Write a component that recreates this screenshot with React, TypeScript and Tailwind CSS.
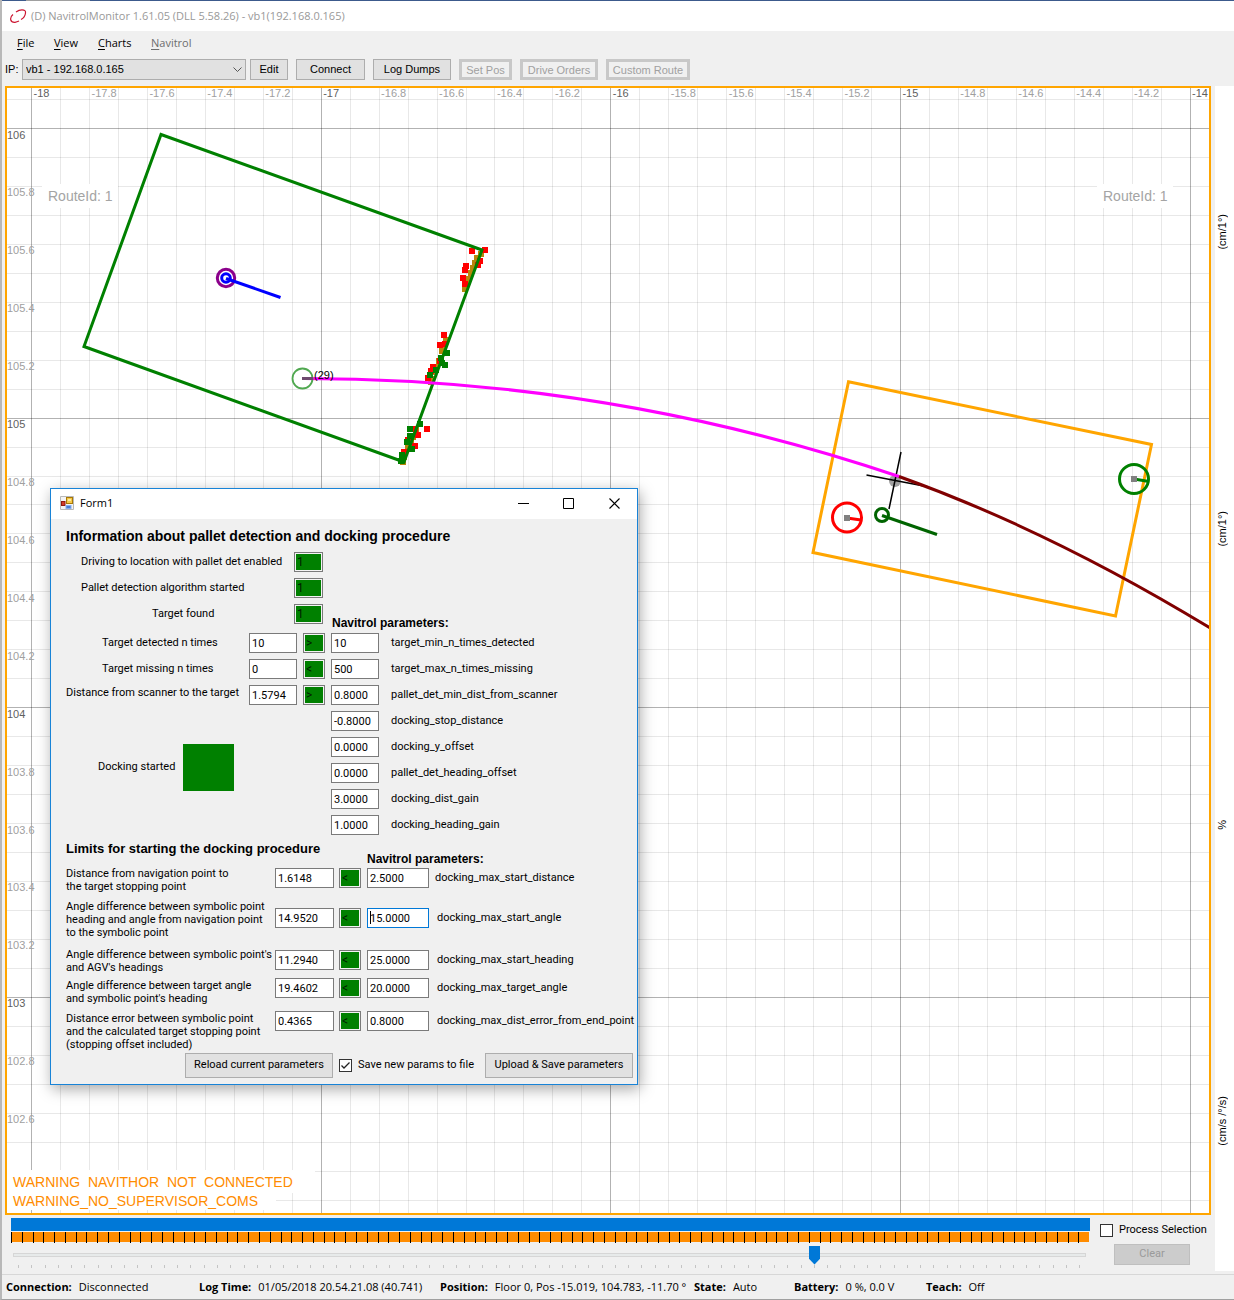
import React from "react";

const ORIGIN_X = 31.6;
const ORIGIN_Y = 128.5;
const STEP = 28.96;

const range = (from: number, to: number) =>
  Array.from({ length: to - from + 1 }, (_, i) => from + i);

type Point = [number, number];

const brownPoints: Point[] = [
  [481, 254], [477, 258], [475, 263], [473, 268], [471, 273], [468, 279], [466, 283], [465, 289],
  [446, 340], [444, 346], [442, 351], [439, 361], [436, 367], [434, 372], [432, 379], [431, 382],
  [416, 430], [413, 437], [411, 443], [408, 447], [404, 457], [403, 462],
];
const redPoints: Point[] = [
  [485, 250], [472, 251], [466, 266], [465, 270], [463, 278], [465, 284], [480, 261], [478, 265],
  [444, 335], [440, 345], [445, 344], [440, 361], [433, 367], [431, 371], [428, 378],
  [427, 429], [418, 435], [415, 446], [404, 452], [415, 429], [408, 440],
];
const greenPoints: Point[] = [
  [447, 353], [441, 358], [445, 365], [436, 370], [430, 375], [442, 363],
  [420, 424], [410, 429], [410, 436], [407, 442], [412, 449], [402, 455], [401, 461],
];

function Squares({ points, fill }: { points: Point[]; fill: string }) {
  return (
    <g fill={fill} shapeRendering="crispEdges">
      {points.map(([x, y], i) => (
        <rect key={i} x={x - 3} y={y - 3} width={6} height={6} />
      ))}
    </g>
  );
}

function MapView() {
  return (
    <svg
      viewBox="7 88 1202 1125"
      preserveAspectRatio="xMinYMin slice"
      className="block h-full w-full font-['Liberation_Sans',sans-serif]"
    >
      <g shapeRendering="crispEdges">
        {range(0, 40).map((k) => (
          <line
            key={k}
            x1={ORIGIN_X + k * STEP}
            x2={ORIGIN_X + k * STEP}
            y1={88}
            y2={1213}
            stroke="#000"
            strokeOpacity={k % 10 === 0 ? 0.3 : 0.09}
          />
        ))}
        {range(-1, 37).map((k) => (
          <line
            key={k}
            y1={ORIGIN_Y + k * STEP}
            y2={ORIGIN_Y + k * STEP}
            x1={7}
            x2={1209}
            stroke="#000"
            strokeOpacity={k % 10 === 0 ? 0.3 : 0.09}
          />
        ))}
      </g>
      <g fontSize={11}>
        {range(0, 20).map((k) => (
          <text
            key={k}
            x={ORIGIN_X + 2 + k * 2 * STEP}
            y={97}
            fill={k % 5 === 0 ? "#606060" : "#a0a0a0"}
          >
            {k % 5 === 0 ? String(-18 + k / 5) : (-18 + k / 5).toFixed(1)}
          </text>
        ))}
        {range(0, 17).map((k) => (
          <text
            key={k}
            x={7}
            y={ORIGIN_Y + 10 + k * 2 * STEP}
            fill={k % 5 === 0 ? "#606060" : "#a0a0a0"}
          >
            {k % 5 === 0 ? String(106 - k / 5) : (106 - k / 5).toFixed(1)}
          </text>
        ))}
      </g>

      <g fill="#fff">
        <rect x={42} y={184} width={76} height={24} />
        <rect x={1097} y={184} width={76} height={24} />
        <rect x={7} y={1170} width={308} height={23} />
        <rect x={7} y={1190} width={269} height={20} />
      </g>
      <g fill="#a4a4a4" fontSize={14}>
        <text x={48} y={201}>RouteId: 1</text>
        <text x={1103} y={201}>RouteId: 1</text>
      </g>
      <g fill="#ff8c00" fontSize={14}>
        <text x={13} y={1187} xmlSpace="preserve">WARNING  NAVITHOR  NOT  CONNECTED</text>
        <text x={13} y={1206}>WARNING_NO_SUPERVISOR_COMS</text>
      </g>

      <Squares points={brownPoints} fill="#b8860b" />
      <Squares points={redPoints} fill="#ff0000" />
      <path d="M161 134.5 482 250 404 462 84 346.5Z" fill="none" stroke="#008000" strokeWidth={3} />
      <Squares points={greenPoints} fill="#008000" />

      <circle cx={226} cy={278} r={8.7} fill="#fff" stroke="#8b008b" strokeWidth={3} />
      <circle cx={226} cy={278} r={4.3} fill="none" stroke="#0000ff" strokeWidth={3} />
      <path d="M226 278.5 280.500 297.500" stroke="#0000ff" strokeWidth={3} />

      <path
        d="M848.5 381.7 1151.500 444.500 1115.500 616 813 552.500Z"
        fill="none"
        stroke="#ffa500"
        strokeWidth={3}
      />
      <circle cx={895} cy={481} r={6} fill="#a0a0a0" />
      <path d="M866.500 475 929 487M901 452 889 509" stroke="#000" strokeWidth={1.5} />
      <path d="M302 378.500A1856 1856 0 0 1 899 476.500" fill="none" stroke="#ff00ff" strokeWidth={3} />
      <path d="M899 476.500Q1051 531 1211 628.500" fill="none" stroke="#800000" strokeWidth={3} />
      <circle cx={302.500} cy={378.500} r={10} fill="none" stroke="#50a850" strokeWidth={1.8} />
      <path d="M302 378.500H313" stroke="#6f4a6f" strokeWidth={3} />
      <text x={314} y={379} fontSize={11}>(29)</text>

      <g fill="none" strokeWidth={3}>
        <circle cx={882} cy={515} r={6.500} stroke="#006400" />
        <path d="M882 515.500 937 534.500" stroke="#006400" />
        <circle cx={847} cy={517.500} r={14.500} stroke="#ff0000" />
        <path d="M847 518 861 520" stroke="#ff0000" />
        <circle cx={1134} cy={479} r={14.500} stroke="#008000" />
        <path d="M1134 479 1149 481.500" stroke="#008000" />
      </g>
      <rect x={844} y={515} width={6} height={6} fill="#808080" />
      <rect x={1131} y={476} width={6} height={6} fill="#808080" />
    </svg>
  );
}

function Flag({ text, label, width }: { text: string; label: string; width: string }) {
  return (
    <input
      readOnly
      aria-label={label}
      defaultValue={text}
      className={`h-5 border border-[#7a7a7a] bg-[#008000] pl-0.5 text-xs text-black/80 shadow-[inset_0_0_0_1px_#f4f4f4] outline-none ${width}`}
    />
  );
}

function Field({
  id,
  label,
  value,
  width,
}: {
  id?: string;
  label?: string;
  value: string;
  width: string;
}) {
  return (
    <input
      id={id}
      aria-label={label}
      defaultValue={value}
      className={`h-5 border border-[#7a7a7a] bg-white pl-0.5 outline-none ${width}`}
    />
  );
}

const flags = [
  { label: "Driving to location with pallet det enabled", pad: "pl-[15px]" },
  { label: "Pallet detection algorithm started", pad: "pl-[15px]" },
  { label: "Target found", pad: "pl-[86px]" },
];

const checks = [
  { label: "Target detected n times", pad: "pl-9", value: "10", op: ">", limit: "10", param: "target_min_n_times_detected" },
  { label: "Target missing n times", pad: "pl-9", value: "0", op: "<", limit: "500", param: "target_max_n_times_missing" },
  { label: "Distance from scanner to the target", pad: "pb-1", value: "1.5794", op: ">", limit: "0.8000", param: "pallet_det_min_dist_from_scanner" },
];

const settings = [
  ["docking_stop_distance", "-0.8000"],
  ["docking_y_offset", "0.0000"],
  ["pallet_det_heading_offset", "0.0000"],
  ["docking_dist_gain", "3.0000"],
  ["docking_heading_gain", "1.0000"],
];

const limits = [
  {
    lines: ["Distance from navigation point to", "the target stopping point"],
    value: "1.6148", limit: "2.5000", param: "docking_max_start_distance",
    row: "h-[33px]", label: "", box: "pt-px", gap: "pl-1.5",
  },
  {
    lines: ["Angle difference between symbolic point", "heading and angle from navigation point", "to the symbolic point"],
    value: "14.9520", limit: "15.0000", param: "docking_max_start_angle", active: true,
    row: "h-12", label: "", box: "pt-2", gap: "pl-2",
  },
  {
    lines: ["Angle difference between symbolic point's", "and AGV's headings"],
    value: "11.2940", limit: "25.0000", param: "docking_max_start_heading",
    row: "h-[30px]", label: "", box: "pt-0.5", gap: "pl-2",
  },
  {
    lines: ["Angle difference between target angle", "and symbolic point's heading"],
    value: "19.4602", limit: "20.0000", param: "docking_max_target_angle",
    row: "h-[33px]", label: "pt-px", box: "", gap: "pl-2",
  },
  {
    lines: ["Distance error between symbolic point", "and the calculated target stopping point", "(stopping offset included)"],
    value: "0.4365", limit: "0.8000", param: "docking_max_dist_error_from_end_point",
    row: "h-[42px]", label: "pt-px", box: "", gap: "pl-2",
  },
];

function FormIcon() {
  return (
    <svg width="14" height="14" viewBox="0 0 14 14" aria-hidden="true">
      <path d="M.5 .5H13.500V13.500H.5Z" fill="#f4f4f4" stroke="#b8b8b8" />
      <rect x="6.500" y="1.500" width="6" height="6" fill="#f7c948" stroke="#a87908" />
      <rect x="8" y="3" width="3" height="2" fill="#fdeaa0" />
      <rect x="1.500" y="5.500" width="3.500" height="4" fill="#d43a2a" stroke="#8e1a10" />
      <rect x="6" y="9.500" width="5" height="3" fill="#4a7fd6" stroke="#87aef0" />
    </svg>
  );
}

function DockingForm() {
  return (
    <section
      aria-label="Form1"
      className="absolute top-[400px] left-[43px] w-[588px] border border-[#1883d7] bg-[#f0f0f0] font-['Roboto',sans-serif] text-[11px] text-black shadow-[2px_4px_14px_rgba(0,0,0,0.35)]"
    >
      <header className="flex h-[30px] items-center bg-white pb-0.5 pl-[9px]">
        <FormIcon />
        <h2 className="ml-1.5 flex-1 font-['Open_Sans',sans-serif] text-[11px]">Form1</h2>
        <button aria-label="Minimize" className="flex h-full w-[46px] items-center justify-center">
          <svg width="11" height="11" viewBox="0 0 11 11"><path d="M0 5.500H11" stroke="#000" /></svg>
        </button>
        <button aria-label="Maximize" className="flex h-full w-[45px] items-center justify-center">
          <svg width="11" height="11" viewBox="0 0 11 11"><path d="M.5 .5H10.500V10.500H.5Z" fill="none" stroke="#000" /></svg>
        </button>
        <button aria-label="Close" className="flex h-full w-[46px] items-center justify-center">
          <svg width="11" height="11" viewBox="0 0 11 11"><path d="M.5 .5 10.500 10.500M10.500 .5 .5 10.500" stroke="#000" strokeWidth="1.100" /></svg>
        </button>
      </header>

      <div className="pt-2 pb-1.5 pl-[15px]">
        <h3 className="mb-1 font-['Liberation_Sans',sans-serif] text-sm leading-[18px] font-bold">
          Information about pallet detection and docking procedure
        </h3>

        <div className="flex">
          <div>
            {flags.map((f) => (
              <div key={f.label} className="grid h-[26px] grid-cols-[228px_auto] items-center">
                <span className={f.pad}>{f.label}</span>
                <Flag text="1" label={f.label} width="w-[29px]" />
              </div>
            ))}
          </div>
          <h4 className="-mb-1 self-end pl-[9px] font-['Liberation_Sans',sans-serif] text-xs leading-4 font-bold">
            Navitrol parameters:
          </h4>
        </div>

        <div className="mt-[3px] grid auto-rows-[26px] grid-cols-[183px_54px_28px_60px_1fr] items-center">
          {checks.map((c) => (
            <React.Fragment key={c.param}>
              <span className={c.pad}>{c.label}</span>
              <Field value={c.value} label={c.label} width="w-12" />
              <Flag text={c.op} label={`${c.label} comparison`} width="w-[22px]" />
              <Field id={c.param} value={c.limit} width="w-12" />
              <label htmlFor={c.param}>{c.param}</label>
            </React.Fragment>
          ))}
          <div className="col-span-3 row-span-5 flex items-center self-center pb-3 pl-8">
            <span className="w-[85px] whitespace-nowrap">Docking started</span>
            <span className="h-[47px] w-[51px] bg-[#008000]" />
          </div>
          {settings.map(([param, value]) => (
            <React.Fragment key={param}>
              <Field id={param} value={value} width="w-12" />
              <label htmlFor={param}>{param}</label>
            </React.Fragment>
          ))}
        </div>

        <div className="mt-0.5 grid h-[27px] grid-cols-[301px_1fr] font-['Liberation_Sans',sans-serif]">
          <h3 className="text-[13px] leading-[18px] font-bold">Limits for starting the docking procedure</h3>
          <h4 className="self-end text-xs font-bold">Navitrol parameters:</h4>
        </div>

        {limits.map((l) => (
          <div key={l.param} className={`grid grid-cols-[209px_64px_28px_62px_1fr] items-start ${l.row}`}>
            <p className={`leading-[13px] ${l.label}`}>
              {l.lines.map((line) => (
                <span key={line} className="block whitespace-nowrap">{line}</span>
              ))}
            </p>
            <div className={`flex ${l.box}`}>
              <Field value={l.value} label={l.lines.join(" ")} width="w-[59px]" />
            </div>
            <div className={`flex ${l.box}`}>
              <Flag text="<" label={`${l.param} comparison`} width="w-[22px]" />
            </div>
            <div className={`flex ${l.box}`}>
              {l.active ? (
                <span className="relative flex">
                  <input
                    id={l.param}
                    defaultValue={l.limit}
                    className="h-5 w-[62px] border border-[#0078d7] bg-white pl-0.5 outline-none"
                  />
                  <span className="absolute top-[3px] left-[3px] h-[13px] w-px bg-black" />
                </span>
              ) : (
                <Field id={l.param} value={l.limit} width="w-[62px]" />
              )}
            </div>
            <label htmlFor={l.param} className={`leading-5 whitespace-nowrap ${l.gap} ${l.box}`}>
              {l.param}
            </label>
          </div>
        ))}

        <div className="flex h-[25px] items-center justify-end pr-1">
          <button className="h-full w-[148px] border border-[#adadad] bg-[#e1e1e1]">Reload current parameters</button>
          <label className="ml-1.5 flex w-[146px] items-center gap-1.5">
            <span className="relative flex">
              <input type="checkbox" defaultChecked className="peer h-[13px] w-[13px] appearance-none border border-[#333] bg-white" />
              <svg className="pointer-events-none absolute inset-0 hidden peer-checked:block" width="13" height="13" viewBox="0 0 13 13">
                <path d="M2.500 6.500 5 9 10.500 3.500" fill="none" stroke="#222" strokeWidth="1.300" />
              </svg>
            </span>
            Save new params to file
          </label>
          <button className="h-full w-[148px] border border-[#adadad] bg-[#e1e1e1]">Upload &amp; Save parameters</button>
        </div>
      </div>
    </section>
  );
}

const menus = [
  { name: "File", width: "w-[37px]", tone: "text-black" },
  { name: "View", width: "w-11", tone: "text-black" },
  { name: "Charts", width: "w-[53px]", tone: "text-black" },
  { name: "Navitrol", width: "w-16", tone: "text-[#6d6d6d]" },
];

const tools = [
  { name: "Edit", width: "w-[38px]", enabled: true },
  { name: "Connect", width: "w-[69px]", enabled: true },
  { name: "Log Dumps", width: "w-[78px]", enabled: true },
  { name: "Set Pos", width: "w-[53px]", enabled: false },
  { name: "Drive Orders", width: "w-[78px]", enabled: false },
  { name: "Custom Route", width: "w-[84px]", enabled: false },
];

const status = [
  { name: "Connection:", value: "Disconnected", width: "w-[193px]" },
  { name: "Log Time:", value: "01/05/2018 20.54.21.08 (40.741)", width: "w-[241px]" },
  { name: "Position:", value: "Floor 0, Pos -15.019, 104.783, -11.70 °", width: "w-[254px]" },
  { name: "State:", value: "Auto", width: "w-[100px]" },
  { name: "Battery:", value: "0 %, 0.0 V", width: "w-[132px]" },
  { name: "Teach:", value: "Off", width: "w-[90px]" },
];

export default function App() {
  return (
    <div className="flex h-screen min-h-[1100px] flex-col overflow-hidden border-b border-l-2 border-b-[#a0a0a0] border-l-[#b8b8b8] bg-[#f0f0f0] font-['Liberation_Sans',sans-serif] text-[11px] text-black">
      <div className="flex h-px shrink-0 bg-[#3c5a8c]">
        <span className="ml-6 w-16 bg-[#a0a0a0]" />
      </div>
      <header className="flex h-[30px] shrink-0 items-center bg-white pl-2 font-['Open_Sans',sans-serif]">
        <svg width="17" height="15" viewBox="0 0 17 15" fill="none" stroke="#cc1430" strokeWidth="1.200" aria-hidden="true">
          <path d="M6 3Q9 .8 12 .8 16 .8 15.500 4 15 8.500 11 10.500" />
          <path d="M3 5.500Q0 8 .8 11 1.500 13.500 5 13.300 7 13 9 12" />
        </svg>
        <h1 className="ml-1 text-[11px] text-[#999]">(D) NavitrolMonitor 1.61.05 (DLL 5.58.26) - vb1(192.168.0.165)</h1>
      </header>

      <nav className="flex h-6 shrink-0 items-center pl-[15px] font-['Open_Sans',sans-serif]">
        {menus.map((m) => (
          <button key={m.name} className={`text-left ${m.width} ${m.tone}`}>
            <span className="underline underline-offset-2">{m.name[0]}</span>
            {m.name.slice(1)}
          </button>
        ))}
      </nav>

      <div className="flex h-[31px] shrink-0 items-center gap-2 pb-0.5 pl-[3px]">
        <div className="-mr-1 flex items-center">
          <label htmlFor="ip" className="w-[17px]">IP:</label>
          <div className="relative">
            <select id="ip" className="block h-[21px] w-[224px] appearance-none border border-[#adadad] bg-[#e1e1e1] pl-[3px]">
              <option>vb1 - 192.168.0.165</option>
            </select>
            <svg className="pointer-events-none absolute top-2 right-1" width="9" height="6" viewBox="0 0 9 6">
              <path d="M.5 .5 4.500 4.500 8.500 .5" fill="none" stroke="#555" />
            </svg>
          </div>
        </div>
        {tools.map((t) => (
          <button
            key={t.name}
            disabled={!t.enabled}
            className={`h-[21px] whitespace-nowrap ${t.width} ${
              t.enabled
                ? "border border-[#adadad] bg-[#e1e1e1]"
                : "border-[3px] border-[#c8c8c8] bg-[#f0f0f0] leading-3 text-[#a0a0a0]"
            }`}
          >
            {t.name}
          </button>
        ))}
      </div>

      <div className="flex min-h-0 flex-1">
        <div className="flex min-w-0 flex-1 flex-col">
          <main className="relative mr-1 ml-[3px] min-h-0 flex-1 border-2 border-[#ffa500] bg-white">
            <MapView />
            <DockingForm />
          </main>

          <div className="flex h-14 shrink-0 pt-[3px] pl-[9px]">
            <div className="min-w-0 flex-1">
              <div className="h-[13px] bg-[#0078d7]" />
              <div className="mt-px mr-px flex h-[11px]">
                {range(0, 99).map((i) => (
                  <span key={i} className="h-[11px] flex-1 border-l border-black">
                    <span className="block h-2.5 bg-[#ff8c00]" />
                  </span>
                ))}
              </div>
              <input
                type="range"
                aria-label="Log position"
                defaultValue={75}
                className="mt-0.5 mr-1 ml-0.5 block h-[19px] w-[calc(100%-6px)] appearance-none bg-transparent [&::-webkit-slider-runnable-track]:h-1 [&::-webkit-slider-runnable-track]:border [&::-webkit-slider-runnable-track]:border-[#d6d6d6] [&::-webkit-slider-runnable-track]:bg-[#e7eaea] [&::-webkit-slider-thumb]:-mt-2 [&::-webkit-slider-thumb]:h-[19px] [&::-webkit-slider-thumb]:w-[11px] [&::-webkit-slider-thumb]:appearance-none [&::-webkit-slider-thumb]:bg-[#0078d7] [&::-webkit-slider-thumb]:[clip-path:polygon(0_0,100%_0,100%_70%,50%_100%,0_70%)]"
              />
              <div className="mt-px mr-[9px] ml-[7px] flex h-[3px] justify-between">
                {range(0, 80).map((i) => (
                  <span key={i} className="w-px bg-[#c4c4c4]" />
                ))}
              </div>
            </div>
            <div className="w-[125px] pt-1.5 pl-2.5 font-['Roboto',sans-serif]">
              <label className="flex h-[13px] items-center gap-1.5">
                <input type="checkbox" className="h-[13px] w-[13px] appearance-none border border-[#333] bg-white" />
                Process Selection
              </label>
              <button disabled className="mt-[7px] ml-3.5 block h-[21px] w-[76px] border border-[#bfbfbf] bg-[#ccc] text-[#9a9a9a]">
                Clear
              </button>
            </div>
          </div>
        </div>

        <aside className="flex w-[19px] flex-col bg-white">
          {["(cm/1°)", "(cm/1°)", "%", "(cm/s /°/s)"].map((unit, i) => (
            <div key={i} className="flex flex-1 items-center justify-center pr-1.5 pb-1">
              <span className="rotate-180 leading-4 whitespace-nowrap [writing-mode:vertical-rl]">{unit}</span>
            </div>
          ))}
        </aside>
      </div>

      <footer className="mt-[3px] flex h-[25px] shrink-0 items-center border-t border-[#d7d7d7] pl-1 font-['Open_Sans',sans-serif] whitespace-nowrap">
        {status.map((s) => (
          <div key={s.name} className={`flex gap-[7px] ${s.width}`}>
            <strong className="font-bold">{s.name}</strong>
            <span>{s.value}</span>
          </div>
        ))}
      </footer>
    </div>
  );
}
